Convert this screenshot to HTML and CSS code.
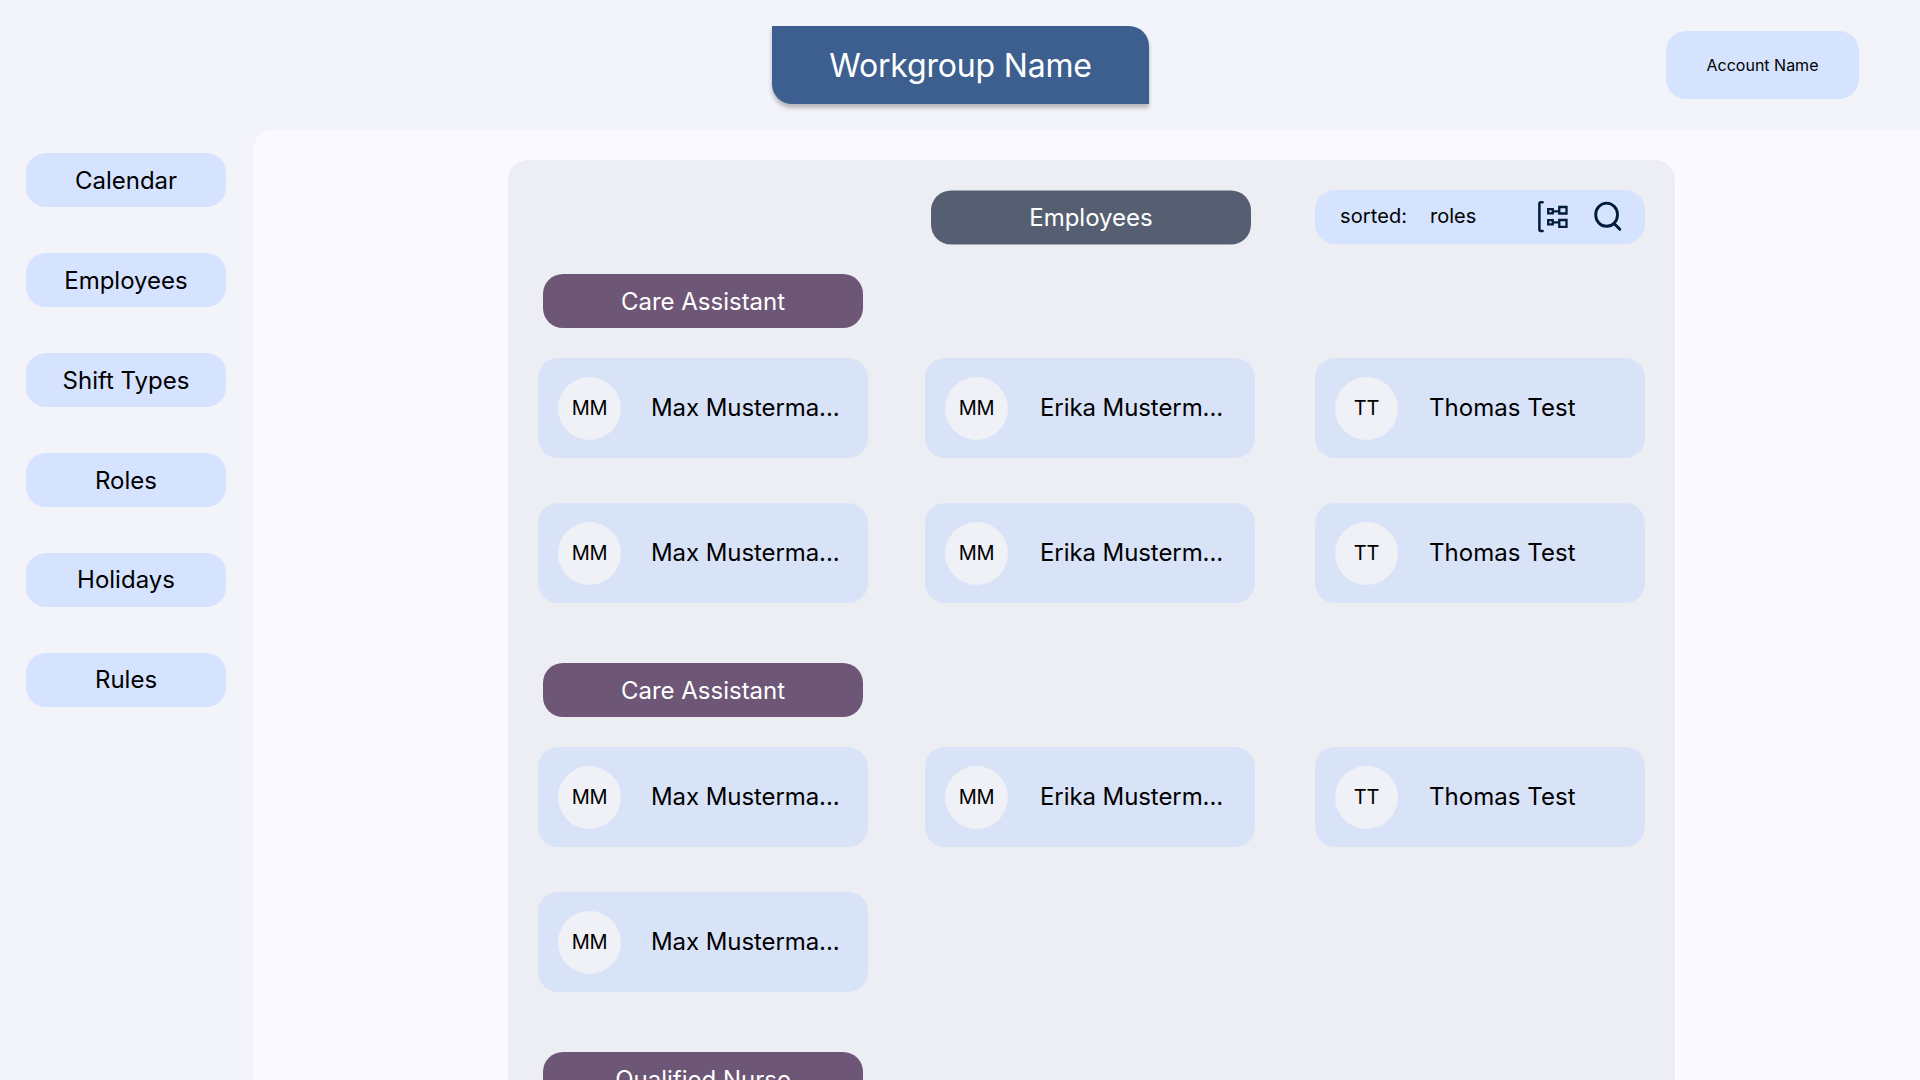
FILE: index.html
```html
<!DOCTYPE html>
<html lang="en">
<head>
<meta charset="utf-8">
<title>Employees</title>
<link rel="stylesheet" href="styles.css">
</head>
<body>
<header class="topbar">
  <h1 class="workgroup">Workgroup Name</h1>
  <button class="account">Account Name</button>
</header>
<div class="layout">
  <nav class="sidebar">
    <a class="nav-item">Calendar</a>
    <a class="nav-item">Employees</a>
    <a class="nav-item">Shift Types</a>
    <a class="nav-item">Roles</a>
    <a class="nav-item nav-item-raised">Holidays</a>
    <a class="nav-item nav-item-raised">Rules</a>
  </nav>
  <main class="content">
    <section class="panel">
      <div class="grid panel-head">
        <h2 class="pill panel-title">Employees</h2>
        <div class="sortbar">
          <span class="sort-label">sorted:</span>
          <span class="sort-value">roles</span>
          <svg class="icon-group" viewBox="0 0 32 34" fill="none">
            <path d="M4.600 2.200H2.800Q1.400 2.200 1.400 3.600V29.600Q1.400 31 2.800 31H4.600" stroke-width="2.500" stroke-linecap="round"/>
            <path d="M10.200 9.200h4.500v4.200h-4.500zM10.200 20.200h4.500v4.200h-4.500zM21.300 7h7.200v6.500h-7.200zM21.300 20h7.200v6.800h-7.200zM14.700 11.300h6.600M14.700 22.300h6.600" stroke-width="2.300"/>
          </svg>
          <svg class="icon-search" viewBox="0 0 32 34" fill="none">
            <ellipse cx="13.600" cy="14.700" rx="10.900" ry="11.600" stroke-width="2.900"/>
            <path d="M21.300 23.800l5.500 5.500" stroke-width="3" stroke-linecap="round"/>
          </svg>
        </div>
      </div>

      <section class="group">
        <h3 class="pill role">Care Assistant</h3>
        <div class="grid">
          <article class="card"><span class="avatar">MM</span><span class="name">Max Musterma...</span></article>
          <article class="card"><span class="avatar">MM</span><span class="name">Erika Musterm...</span></article>
          <article class="card"><span class="avatar">TT</span><span class="name">Thomas Test</span></article>
          <article class="card"><span class="avatar">MM</span><span class="name">Max Musterma...</span></article>
          <article class="card"><span class="avatar">MM</span><span class="name">Erika Musterm...</span></article>
          <article class="card"><span class="avatar">TT</span><span class="name">Thomas Test</span></article>
        </div>
      </section>

      <section class="group">
        <h3 class="pill role">Care Assistant</h3>
        <div class="grid">
          <article class="card"><span class="avatar">MM</span><span class="name">Max Musterma...</span></article>
          <article class="card"><span class="avatar">MM</span><span class="name">Erika Musterm...</span></article>
          <article class="card"><span class="avatar">TT</span><span class="name">Thomas Test</span></article>
          <article class="card"><span class="avatar">MM</span><span class="name">Max Musterma...</span></article>
        </div>
      </section>

      <section class="group">
        <h3 class="pill role">Qualified Nurse</h3>
      </section>
    </section>
  </main>
</div>
</body>
</html>
```
FILE: styles.css
```css
* { box-sizing: border-box; margin: 0; }

body {
  height: 100vh;
  overflow: hidden;
  background: #f3f3fa;
  color: #000;
  font: 400 24px/30px Inter, sans-serif;
  display: flex;
  flex-direction: column;
}

.topbar {
  height: 130px;
  flex: none;
  display: grid;
  grid-template-columns: 772px 377px 1fr;
  align-items: center;
  padding-right: 61px;
}
.workgroup {
  grid-column: 2;
  height: 78px;
  padding-top: 2px;
  display: grid;
  place-items: center;
  background: #3d5f90;
  color: #fff;
  border-radius: 0 20px 0 20px;
  box-shadow: 0 4px 4px rgba(0, 0, 0, .25);
  font-size: 32px;
  font-weight: 400;
  letter-spacing: -.18px;
}
.account {
  justify-self: end;
  width: 193px;
  height: 68px;
  border: 0;
  border-radius: 20px;
  background: #d5e3ff;
  color: #000;
  font: 400 16px/20px Inter, sans-serif;
}

.layout { flex: 1; min-height: 0; display: flex; }

.sidebar {
  width: 253px;
  padding: 23px 27px 0 26px;
  display: flex;
  flex-direction: column;
  gap: 46px;
}
.nav-item {
  height: 54px;
  padding-top: 2px;
  flex: none;
  display: grid;
  place-items: center;
  border-radius: 20px;
  background: #d5e3ff;
}
.nav-item-raised { padding-top: 0; }

.content {
  flex: 1;
  padding: 30px 245px 0 255px;
  background: #f9f9ff;
  border-top-left-radius: 20px;
  overflow: hidden;
}
.panel {
  min-height: 100%;
  padding: 30px 30px 60px;
  border-radius: 20px 20px 0 0;
  background: #edeef4;
}
.grid {
  display: grid;
  grid-template-columns: 387px 390px 330px;
  row-gap: 45px;
}

.pill {
  width: 320px;
  height: 54px;
  padding-top: 2px;
  display: grid;
  place-items: center;
  border-radius: 20px;
  color: #fff;
  font-size: 24px;
  font-weight: 400;
}
.panel-title {
  grid-column: 2;
  margin-left: 6px;
  padding-top: 0;
  background: #555f71;
  transform: translateY(.5px);
}
.role { margin: 0 0 30px 5px; background: #6e5676; }
.group { margin-top: 30px; }
.group + .group { margin-top: 60px; }

.sortbar {
  height: 54px;
  display: flex;
  align-items: center;
  padding: 0 20px 0 25px;
  border-radius: 20px;
  background: #d5e3ff;
  font-size: 20px;
}
.sort-label { width: 90px; letter-spacing: .1px; }
.sort-value { flex: 1; }
.sort-label, .sort-value { padding-bottom: 2px; }
.icon-group, .icon-search { width: 32px; height: 34px; stroke: #001c3b; }
.icon-search { margin-left: 23px; }

.card {
  width: 330px;
  height: 100px;
  display: flex;
  align-items: center;
  padding: 0 20px;
  border-radius: 20px;
  background: #d9e3f8;
  white-space: nowrap;
}
.avatar {
  width: 63px;
  height: 63px;
  flex: none;
  display: grid;
  place-items: center;
  border-radius: 50%;
  background: #f0f0f7;
  font-size: 20px;
  letter-spacing: -.2px;
}
.name { margin-left: 30px; letter-spacing: -.08px; }
.card:nth-child(3n + 2) .name { margin-left: 32px; }
.card:nth-child(3n) .name { margin-left: 31px; letter-spacing: .05px; }
```
